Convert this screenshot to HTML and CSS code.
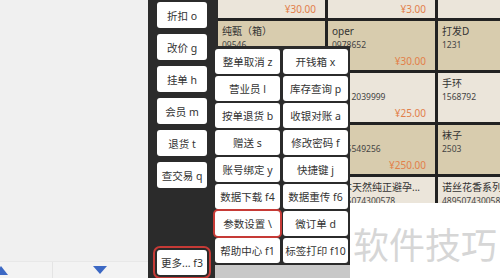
FILE: index.html
```html
<!DOCTYPE html>
<html lang="zh-CN">
<head>
  <meta charset="UTF-8">
  <title>收银台</title>
  <link rel="stylesheet" href="styles.css">
</head>
<body>
  <div class="screen">
    <div class="list-pane">
      <div class="list-body"></div>
      <div class="pager">
        <div class="pager-cell first"><span class="tri-up"></span></div>
        <div class="pager-cell second"><span class="tri-down"></span></div>
      </div>
    </div>

    <div class="work-pane">
      <div class="side-keys">
        <div class="key">折扣 o</div>
        <div class="key">改价 g</div>
        <div class="key">挂单 h</div>
        <div class="key">会员 m</div>
        <div class="key">退货 t</div>
        <div class="key">查交易 q</div>
        <div class="key key-more">更多... f3</div>
      </div>

      <div class="goods">
        <div class="goods-grid">
          <div class="item light"><span class="name">可口可乐</span><span class="code">6901</span><span class="price">¥30.00</span></div>
          <div class="item light"><span class="name">矿泉水</span><span class="code">6902</span><span class="price">¥3.00</span></div>
          <div class="item light"><span class="name">面包</span><span class="code">6903</span><span class="price">¥8.00</span></div>

          <div class="item tan"><span class="name">纯甄（箱）</span><span class="code">09546</span><span class="price">¥60.00</span></div>
          <div class="item tan"><span class="name">oper</span><span class="code">0978652</span><span class="price">¥30.00</span></div>
          <div class="item tan"><span class="name">打发D</span><span class="code">1231</span><span class="price">¥10.00</span></div>

          <div class="item light"><span class="name">洗衣液</span><span class="code">69212039999</span><span class="price">¥25.00</span></div>
          <div class="item light"><span class="name">水</span><span class="code">69212039999</span><span class="price">¥25.00</span></div>
          <div class="item light"><span class="name">手环</span><span class="code">1568792</span><span class="price">¥99.00</span></div>

          <div class="item tan"><span class="name">电饭煲</span><span class="code">6925549256</span><span class="price">¥250.00</span></div>
          <div class="item tan"><span class="name">米</span><span class="code">6925549256</span><span class="price">¥250.00</span></div>
          <div class="item tan"><span class="name">袜子</span><span class="code">2503</span><span class="price">¥15.00</span></div>

          <div class="item light"><span class="name">牙膏</span><span class="code">4895074300571</span><span class="price">¥12.00</span></div>
          <div class="item light"><span class="name">冈本天然纯正避孕...</span><span class="code">4895074300578</span><span class="price">¥39.00</span></div>
          <div class="item light"><span class="name">诺丝花香系列果...</span><span class="code">4895074300585</span><span class="price">¥39.00</span></div>
        </div>
      </div>

      <div class="more-menu">
        <div class="menu-grid">
          <div class="key">整单取消 z</div>
          <div class="key">开钱箱 x</div>
          <div class="key">营业员 l</div>
          <div class="key">库存查询 p</div>
          <div class="key">按单退货 b</div>
          <div class="key">收银对账 a</div>
          <div class="key">赠送 s</div>
          <div class="key">修改密码 f</div>
          <div class="key">账号绑定 y</div>
          <div class="key">快捷键 j</div>
          <div class="key">数据下载 f4</div>
          <div class="key">数据重传 f6</div>
          <div class="key key-marked">参数设置 \</div>
          <div class="key">微订单 d</div>
          <div class="key">帮助中心 f1</div>
          <div class="key">标签打印 f10</div>
        </div>
        <div class="menu-foot"></div>
      </div>

      <div class="watermark">软件技巧</div>
    </div>
  </div>
</body>
</html>
```

FILE: styles.css
```css
body {
  margin: 0;
  font-family: "Noto Sans", "Noto Sans CJK SC", sans-serif;
  color: #333;
  overflow: hidden;
}

.screen {
  display: flex;
  width: 500px;
  height: 278px;
}

/* left: order list */
.list-pane {
  width: 148px;
  display: flex;
  flex-direction: column;
  background-color: #f0f0f0;
}

.list-body {
  flex: 1;
}

.pager {
  height: 16px;
  display: flex;
  background-color: #f3f3f3;
  border-top: 1px solid #e8e8e8;
}

.pager-cell {
  display: flex;
  align-items: center;
}

.pager-cell.first {
  width: 52px;
  border-right: 1px solid #e4e4e4;
}

.pager-cell.second {
  flex: 1;
  justify-content: center;
}

.tri-up {
  width: 0;
  height: 0;
  margin-left: -6px;
  border-left: 7px solid transparent;
  border-right: 7px solid transparent;
  border-bottom: 9px solid #3c68c4;
}

.tri-down {
  width: 0;
  height: 0;
  margin-left: -2px;
  border-left: 7px solid transparent;
  border-right: 7px solid transparent;
  border-top: 8px solid #3c68c4;
}

/* right: dark work area */
.work-pane {
  position: relative;
  flex: 1;
  display: flex;
  background-color: #2b2b2b;
  overflow: hidden;
}

.key {
  display: flex;
  align-items: center;
  justify-content: center;
  background-color: #fff;
  border-radius: 3px;
  font-size: 10.5px;
  color: #333;
  white-space: nowrap;
}

.side-keys {
  width: 50px;
  padding: 2px 0 3px 9px;
  display: flex;
  flex-direction: column;
  gap: 6px;
}

.side-keys .key {
  height: 26px;
}

.side-keys .key-more {
  margin-top: auto;
  height: 25px;
  outline: 2px solid #c63a36;
  outline-offset: 2px;
}

.goods {
  flex: 1;
  padding-left: 11px;
  overflow: hidden;
}

.goods-grid {
  margin-top: -31px;
  display: grid;
  grid-template-columns: 107px 107px 107px;
  grid-auto-rows: 49px;
  gap: 3px;
  background-color: #222;
}

.item {
  display: flex;
  flex-direction: column;
  padding: 3px 9px 0 4px;
  white-space: nowrap;
}

.item.light {
  background-color: #ebe5da;
}

.item.tan {
  background-color: #d8ccae;
}

.item .name {
  font-size: 10px;
  line-height: 14px;
  color: #333;
}

.item .code {
  font-size: 8.5px;
  line-height: 14px;
  color: #444;
}

.item .price {
  margin-top: auto;
  margin-bottom: 3px;
  align-self: flex-end;
  font-size: 10px;
  line-height: 12px;
  color: #e2804a;
}

/* "more" popup menu */
.more-menu {
  position: absolute;
  left: 63px;
  top: 46px;
  width: 139px;
  bottom: 0;
  display: flex;
  flex-direction: column;
  background-color: #2b2b2b;
}

.menu-grid {
  padding: 3px 2px 2px 4px;
  display: grid;
  grid-template-columns: 65px 65px;
  grid-auto-rows: 25px;
  gap: 2px 3px;
}

.menu-grid .key-marked {
  box-shadow: 0 0 0 2px #c63a36;
}

.menu-foot {
  flex: 1;
  margin-left: 4px;
  background-color: #c8c8c8;
}

.watermark {
  position: absolute;
  left: 202px;
  top: 203px;
  right: 0;
  bottom: 0;
  display: flex;
  align-items: center;
  justify-content: center;
  padding-top: 4px;
  background-color: #fff;
  font-family: "Noto Sans CJK SC", sans-serif;
  font-size: 36px;
  color: #d6d6d6;
}
```
